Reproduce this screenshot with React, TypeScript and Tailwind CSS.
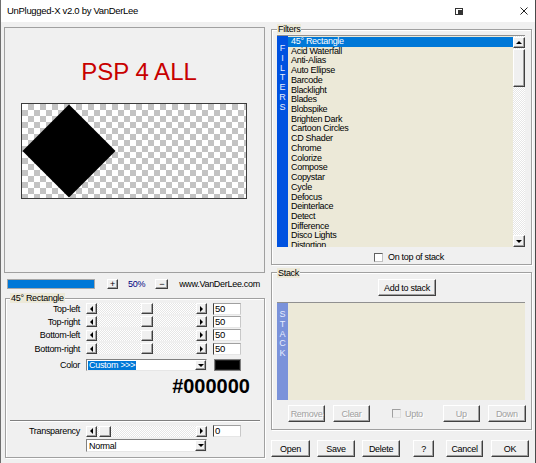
import React from "react";

const FILTERS = [
  "45° Rectangle",
  "Acid Waterfall",
  "Anti-Alias",
  "Auto Ellipse",
  "Barcode",
  "Blacklight",
  "Blades",
  "Blobspike",
  "Brighten Dark",
  "Cartoon Circles",
  "CD Shader",
  "Chrome",
  "Colorize",
  "Compose",
  "Copystar",
  "Cycle",
  "Defocus",
  "Deinterlace",
  "Detect",
  "Difference",
  "Disco Lights",
  "Distortion",
];

const RAISED =
  "border border-t-white border-l-white border-r-[#404040] border-b-[#404040] bg-[#f0f0f0] shadow-[inset_-1px_-1px_0_#a0a0a0]";
const SUNKEN =
  "border border-t-[#808080] border-l-[#808080] border-r-[#e6e6e6] border-b-[#e6e6e6] bg-white";
const ETCHED =
  "border border-[#a0a0a0] shadow-[inset_1px_1px_0_#fff,1px_1px_0_#fff]";
const TRACK =
  "bg-[#f4f4f4] bg-[image:repeating-conic-gradient(#ffffff_0_25%,#e6e6e6_0_50%)] bg-[length:2px_2px]";

function Tri({ dir }: { dir: "left" | "right" | "up" | "down" }) {
  const pts =
    dir === "left"
      ? "3,0 3,6 0,3"
      : dir === "right"
      ? "0,0 0,6 3,3"
      : dir === "up"
      ? "0,3 6,3 3,0"
      : "0,0 6,0 3,3";
  const w = dir === "left" || dir === "right" ? 3 : 6;
  const h = dir === "left" || dir === "right" ? 6 : 3;
  return (
    <svg width={w} height={h} viewBox={`0 0 ${w} ${h}`} className="block">
      <polygon points={pts} fill="#000" />
    </svg>
  );
}

function ArrowBtn({ dir, className }: { dir: "left" | "right" | "up" | "down"; className: string }) {
  return (
    <div className={`${RAISED} ${className} flex items-center justify-center shrink-0`}>
      <Tri dir={dir} />
    </div>
  );
}

function HScroll({ spacer }: { spacer: string }) {
  return (
    <div className="w-[121px] h-[11px] flex">
      <ArrowBtn dir="left" className="w-[11px] h-[11px]" />
      <div className={`flex-1 flex ${TRACK}`}>
        <div className={spacer} />
        <div className={`${RAISED} w-[12px] h-[11px]`} />
      </div>
      <ArrowBtn dir="right" className="w-[11px] h-[11px]" />
    </div>
  );
}

function Edit({ value }: { value: string }) {
  return (
    <div className="w-[28px] h-[12px] bg-white border border-t-[#a0a0a0] border-l-[#404040] border-r-[#c8c8c8] border-b-[#e6e6e6] pl-[1px] flex items-center text-[9.5px] leading-[10px]">
      {value}
    </div>
  );
}

function SliderRow({ label }: { label: string }) {
  return (
    <div className="h-[13.33px] flex items-center">
      <div className="w-[74px] text-right">{label}</div>
      <div className="ml-[6px]">
        <HScroll spacer="w-[44px]" />
      </div>
      <div className="ml-[6px]">
        <Edit value="50" />
      </div>
    </div>
  );
}

function Button({ label, className, disabled }: { label: string; className: string; disabled?: boolean }) {
  return (
    <div
      className={`${RAISED} ${className} h-[17px] flex items-center justify-center shrink-0 ${
        disabled ? "text-[#a0a0a0] [text-shadow:1px_1px_0_#fff]" : "text-black"
      }`}
    >
      {label}
    </div>
  );
}

export default function App() {
  return (
    <div className="w-[536px] h-[463px] overflow-hidden bg-[#f0f0f0] border-l border-r border-l-[#6e6e6e] border-r-[#4a4a4a] flex flex-col text-black text-[9px] leading-[10px] tracking-[-0.3px] font-['Liberation_Sans',Arial,sans-serif]">
      {/* Title bar */}
      <div className="h-[22px] shrink-0 bg-white flex items-center pl-[6px] pr-[7px]">
        <span className="text-[9.5px] leading-[12px] text-black">UnPlugged-X v2.0 by VanDerLee</span>
        <svg width="8" height="7" viewBox="0 0 8 7" className="ml-auto block">
          <rect x="0.5" y="0.5" width="7" height="6" fill="none" stroke="#333" strokeWidth="1" />
          <rect x="3" y="2" width="4" height="4" fill="#333" />
        </svg>
        <svg width="8" height="8" viewBox="0 0 8 8" className="ml-[57px] block">
          <path d="M0.5 0.5 L7.5 7.5 M7.5 0.5 L0.5 7.5" stroke="#222" strokeWidth="1" />
        </svg>
      </div>

      <div className="flex pl-[3px]">
        {/* Left column */}
        <div className="w-[261px] flex flex-col">
          {/* Preview */}
          <div className="mt-[5px] h-[246px] border border-[#a0a0a0] bg-[#f0f0f0] flex flex-col items-center">
            <div className="mt-[32px] pl-[9px] text-[24px] leading-[24px] tracking-normal text-[#c80000]">
              PSP 4 ALL
            </div>
            <div className="mt-[19px] ml-[-1px] relative w-[226px] h-[96px] border border-[#3c3c3c] bg-white bg-[image:repeating-conic-gradient(#c3c3c3_0_25%,#ffffff_0_50%)] bg-[length:12px_12px]">
              <svg width="224" height="94" viewBox="0 0 224 94" className="absolute left-0 top-0 block">
                <polygon points="47,0.5 93.5,47 47,93.5 0.5,47" fill="#000" />
              </svg>
            </div>
          </div>

          {/* Zoom row */}
          <div className="mt-[6px] h-[10px] flex items-center">
            <div className="ml-[3px] w-[88px] h-[10px] border border-[#a8a8a8] bg-[#0078d7]" />
            <div className={`${RAISED} ml-[12px] w-[11px] h-[10px] flex items-center justify-center text-[9px] leading-[8px]`}>
              +
            </div>
            <div className="ml-[10px] text-[#000080]">50%</div>
            <div className={`${RAISED} ml-[10px] w-[13px] h-[10px] flex items-center justify-center text-[9px] leading-[8px]`}>
              −
            </div>
            <div className="ml-[11px]">www.VanDerLee.com</div>
          </div>

          {/* 45° Rectangle group */}
          <div className={`relative mt-[9px] ml-[1px] w-[260px] h-[160px] ${ETCHED} flex flex-col pt-[3px]`}>
            <span className="absolute left-[4px] -top-[6px] bg-[#ece9d8] px-[1px] leading-[10px]">45° Rectangle</span>
            <SliderRow label="Top-left" />
            <SliderRow label="Top-right" />
            <SliderRow label="Bottom-left" />
            <SliderRow label="Bottom-right" />
            <div className="mt-[4px] h-[12px] flex items-center">
              <div className="w-[74px] text-right">Color</div>
              <div className={`ml-[6px] w-[121px] h-[12px] flex ${SUNKEN}`}>
                <div className="flex-1 flex items-center pl-[1px]">
                  <span className="bg-[#0078d7] text-white px-[1px] leading-[9px]">Custom &gt;&gt;&gt;</span>
                </div>
                <ArrowBtn dir="down" className="w-[11px] h-[10px]" />
              </div>
              <div className="ml-[7px] w-[27px] h-[12px] border border-[#808080] bg-black shadow-[inset_0_0_0_1px_#202020]" />
            </div>
            <div className="mt-[4px] h-[22px] pr-[14px] text-right text-[20px] leading-[22px] tracking-normal font-bold">
              #000000
            </div>
            <div className="mt-[23px] mx-[4px] h-[2px] border-t border-t-[#808080] border-b border-b-white" />
            <div className="mt-[3px] h-[12px] flex items-center">
              <div className="w-[74px] text-right">Transparency</div>
              <div className="ml-[6px]">
                <HScroll spacer="w-[2px]" />
              </div>
              <div className="ml-[6px]">
                <Edit value="0" />
              </div>
            </div>
            <div className={`mt-[2px] ml-[80px] w-[121px] h-[13px] flex ${SUNKEN}`}>
              <div className="flex-1 flex items-center pl-[2px]">Normal</div>
              <ArrowBtn dir="down" className="w-[11px] h-[11px]" />
            </div>
          </div>
        </div>

        {/* Right column */}
        <div className="ml-[6px] w-[261px] flex flex-col">
          {/* Filters group */}
          <div className={`relative mt-[7px] h-[236px] ${ETCHED} flex flex-col pl-[5px] pt-[5px]`}>
            <span className="absolute left-[5px] -top-[6px] bg-[#ece9d8] px-[1px] leading-[10px]">Filters</span>
            <div className="w-[248px] h-[212px] flex border-t border-t-[#909090]">
              <div className="w-[11px] bg-[#0052e0] flex flex-col items-center pt-[8px] text-[#e6ecff] leading-[9.8px] tracking-normal">
                <span>F</span>
                <span>I</span>
                <span>L</span>
                <span>T</span>
                <span>E</span>
                <span>R</span>
                <span>S</span>
              </div>
              <div className="flex-1 bg-[#ece9d8] pt-[1px] overflow-hidden">
                {FILTERS.map((f, i) => (
                  <div
                    key={f}
                    className={`h-[9.72px] leading-[9.72px] pl-[3px] whitespace-nowrap ${
                      i === 0 ? "bg-[#0078d7] text-white" : "text-black"
                    }`}
                  >
                    {f}
                  </div>
                ))}
              </div>
              <div className={`w-[12px] flex flex-col pt-[1px] ${TRACK}`}>
                <ArrowBtn dir="up" className="w-[12px] h-[11px]" />
                <div className={`${RAISED} mt-[1px] w-[12px] h-[38px]`} />
                <div className="flex-1" />
                <ArrowBtn dir="down" className="w-[12px] h-[12px]" />
              </div>
            </div>
            <div className="mt-[5px] flex items-center justify-center pl-[10px]">
              <div className="w-[9px] h-[9px] bg-white border border-t-[#606060] border-l-[#606060] border-r-[#c0c0c0] border-b-[#c0c0c0]" />
              <span className="ml-[5px]">On top of stack</span>
            </div>
          </div>

          {/* Stack group */}
          <div className={`relative mt-[7px] h-[158px] ${ETCHED} flex flex-col pl-[5px] pt-[6px]`}>
            <span className="absolute left-[5px] -top-[5px] bg-[#ece9d8] px-[1px] leading-[10px]">Stack</span>
            <Button label="Add to stack" className="ml-[101px] w-[58px]" />
            <div className="mt-[6px] w-[248px] h-[98px] flex border-t border-t-[#909090]">
              <div className="w-[11px] bg-[#7a92da] flex flex-col items-center pt-[7px] text-[#e6ecff] leading-[9.8px] tracking-normal">
                <span>S</span>
                <span>T</span>
                <span>A</span>
                <span>C</span>
                <span>K</span>
              </div>
              <div className="flex-1 bg-[#ece9d8]" />
            </div>
            <div className="mt-[5px] flex items-center">
              <Button label="Remove" className="ml-[11px] w-[37px]" disabled />
              <Button label="Clear" className="ml-[8px] w-[37px]" disabled />
              <div className="ml-[22px] w-[9px] h-[9px] bg-[#f0f0f0] border border-t-[#a0a0a0] border-l-[#a0a0a0] border-r-[#e0e0e0] border-b-[#e0e0e0]" />
              <span className="ml-[4px] text-[#a0a0a0] [text-shadow:1px_1px_0_#fff]">Upto</span>
              <Button label="Up" className="ml-[20px] w-[37px]" disabled />
              <Button label="Down" className="ml-[8px] w-[38px]" disabled />
            </div>
          </div>

          {/* Bottom buttons */}
          <div className="mt-[10px] flex">
            <Button label="Open" className="w-[39px]" />
            <Button label="Save" className="ml-[7px] w-[38px]" />
            <Button label="Delete" className="ml-[7px] w-[38px]" />
            <Button label="?" className="ml-[13px] w-[21px]" />
            <Button label="Cancel" className="ml-[12px] w-[37px]" />
            <Button label="OK" className="ml-[8px] w-[38px]" />
          </div>
        </div>
      </div>
    </div>
  );
}
